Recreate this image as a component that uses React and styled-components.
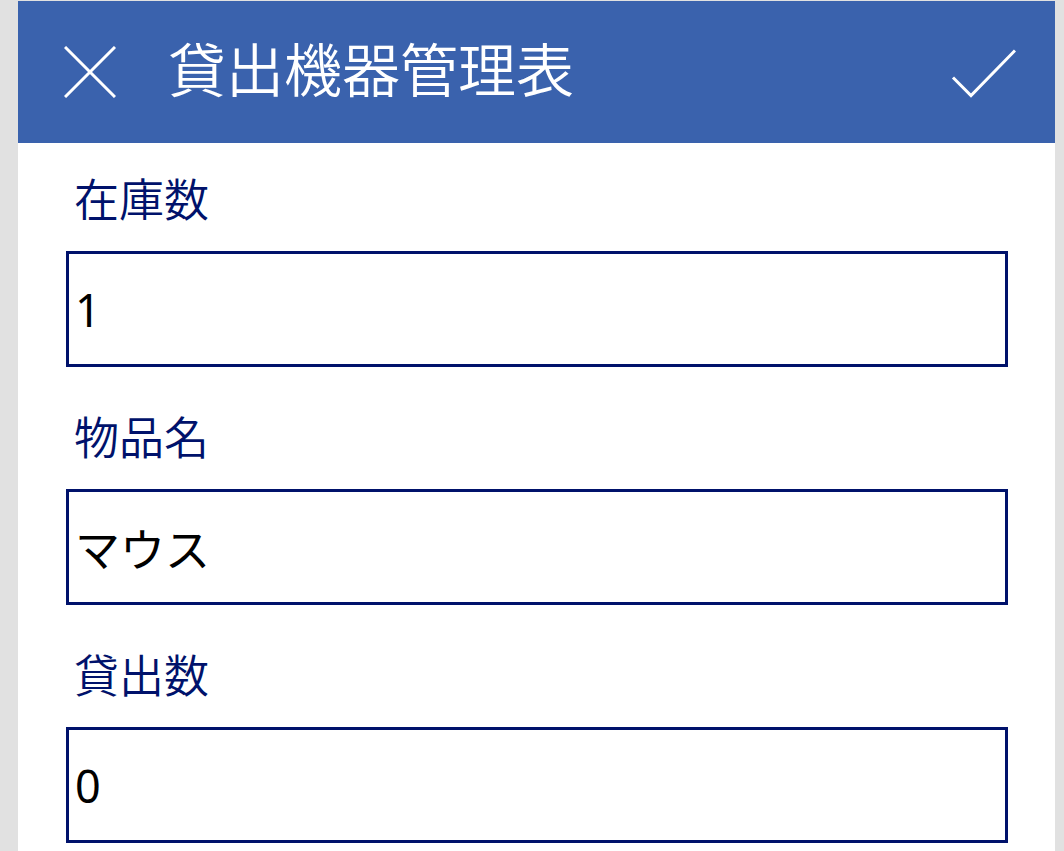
import React from "react";
import styled, { createGlobalStyle } from "styled-components";

const Global = createGlobalStyle`
  html, body {
    margin: 0;
    padding: 0;
    background: #e1e1e1;
    font-family: "Noto Sans CJK JP", "Noto Sans", sans-serif;
  }
`;

const Panel = styled.div`
  margin: 1px 0 0 18px;
  width: 1037px;
  min-height: 850px;
  background: #ffffff;
  box-sizing: border-box;
`;

const Header = styled.header`
  height: 142px;
  background: #3a62ad;
  display: flex;
  align-items: center;
  padding: 0 39px 0 46px;
  box-sizing: border-box;
`;

const IconButton = styled.button`
  background: none;
  border: none;
  padding: 0;
  margin: 0;
  display: flex;
  align-items: center;
  justify-content: center;
  cursor: pointer;
  margin-top: ${(p) => p.$offset || 0}px;
`;

const Title = styled.h1`
  flex: 1;
  margin: 0 0 10px 52px;
  color: #ffffff;
  font-family: "Noto Sans CJK JP", sans-serif;
  font-size: 58px;
  font-weight: 350;
  line-height: 1;
  letter-spacing: 0;
`;

const Body = styled.div`
  padding: 25px 47px 0 48px;
`;

const Field = styled.div`
  display: flex;
  flex-direction: column;
  margin-bottom: 39px;
`;

const Label = styled.label`
  height: 60px;
  line-height: 60px;
  font-size: 45px;
  font-weight: 350;
  color: #00126b;
  padding-left: 8px;
  margin-bottom: 23px;
`;

const Input = styled.input`
  box-sizing: border-box;
  width: 100%;
  height: 116px;
  border: 3px solid #00126b;
  border-radius: 0;
  padding: 0 0 0 6px;
  margin: 0;
  font-family: "Noto Sans", "Noto Sans CJK JP", sans-serif;
  font-size: 45px;
  font-weight: 400;
  color: #000000;
  background: #ffffff;
  outline: none;
`;

const fields = [
  { label: "在庫数", value: "1" },
  { label: "物品名", value: "マウス" },
  { label: "貸出数", value: "0" },
];

export default function App() {
  return (
    <>
      <Global />
      <Panel>
        <Header>
          <IconButton aria-label="閉じる">
            <svg width="52" height="52" viewBox="0 0 52 52">
              <path d="M1 1 L51 51 M51 1 L1 51" stroke="#fff" strokeWidth="3" fill="none" />
            </svg>
          </IconButton>
          <Title>貸出機器管理表</Title>
          <IconButton aria-label="保存" $offset={2}>
            <svg width="66" height="49" viewBox="0 0 66 49">
              <path d="M3 28.5 L21 46.5 L65 1.5" stroke="#fff" strokeWidth="3" fill="none" />
            </svg>
          </IconButton>
        </Header>
        <Body>
          {fields.map((f) => (
            <Field key={f.label}>
              <Label>{f.label}</Label>
              <Input defaultValue={f.value} readOnly />
            </Field>
          ))}
        </Body>
      </Panel>
    </>
  );
}
